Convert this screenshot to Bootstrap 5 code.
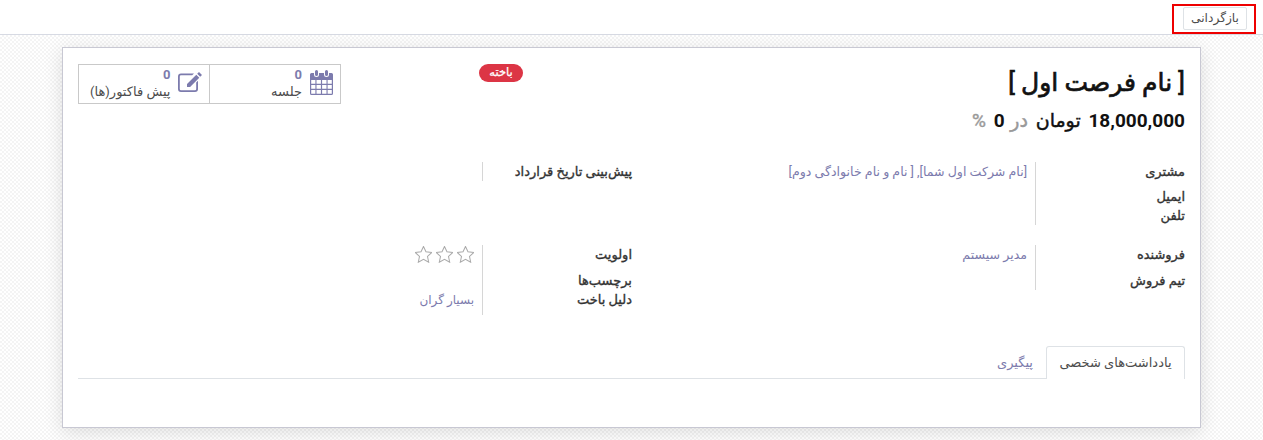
<!DOCTYPE html>
<html lang="fa" dir="rtl">
<head>
<meta charset="utf-8">
<title>فرصت</title>
<link href="https://cdn.jsdelivr.net/npm/bootstrap@5.3.0/dist/css/bootstrap.min.css" rel="stylesheet">
<style>
html,body{height:440px;overflow:hidden}
body{font-family:Roboto,"DejaVu Sans",sans-serif;font-size:13px;color:#4c4c4c;background:#fff}
.topbar{height:35px;background:#fff;border-bottom:1px solid #d7dae3;padding-inline-start:7px;padding-top:4px}
.back-wrap{display:block;width:84px;height:30px;border:2px solid #e00;padding:1px 7px 1px 9px}
.back-btn{display:block;width:64px;height:23px;padding:0;font-size:12.2px;line-height:21px;color:#4c4c4c;background:#fff;border:1px solid #dee2e6;border-radius:2px;text-align:center}
.sheet-bg{height:405px;background-color:#fff;background-image:conic-gradient(#f4f4f4 25%,#fff 0 50%,#f4f4f4 0 75%,#fff 0);background-size:4px 4px;padding:12px 62px 0 62px}
.sheet{height:381px;background:#fff;border:1px solid #c8c8d3;box-shadow:0 4px 18px rgba(0,0,0,.12);padding:16px 15px 0 15px;position:relative}
.head{height:85px}
.title-name{font-size:25px;font-weight:400;-webkit-text-stroke:.7px #111;color:#111;line-height:36px;margin:1px 0 0}
.amount{font-size:19px;-webkit-text-stroke:.45px #111;color:#111;line-height:24px;margin-top:8px}
.amount .digits{font-size:19px;font-weight:700;-webkit-text-stroke:0}
.amount .toman{margin-inline-start:3px}
.amount .muted{color:#999;-webkit-text-stroke:.45px #999;margin-inline:3px 1px}
.stat-group{width:263px;height:40px;border:1px solid #c9c9c9}
.stat-box{width:131px;height:38px;padding:2px 7px 0 0;gap:8px}
.stat-box+.stat-box{border-inline-start:1px solid #c9c9c9;gap:7px}
.stat-cal{width:23px;height:25px;flex:none;margin-top:3px;fill:#7c7bad}
.stat-edit{width:24px;height:20px;flex:none;margin-top:5px;fill:#7c7bad}
.stat-num{font-weight:700;color:#7c7bad;font-size:13px;line-height:16px}
.stat-label{font-size:13px;line-height:17px;color:#4c4c4c}
.lost-pill{position:absolute;left:416px;top:16px;height:18px;width:44px;line-height:17px;font-size:11.5px;-webkit-text-stroke:.25px #fff;background:#dc3545;color:#fff;border-radius:9px;text-align:center}
.cell-half{width:553px}
.lab{-webkit-text-stroke:.35px #333;color:#333;font-size:13px;line-height:19px;width:149px;flex:none}
.val{color:#7c7bad;font-size:12.6px;line-height:19px;padding-inline-start:8px;flex:1;border-inline-start:1px solid #d6d6d6}
.val-empty{min-height:19px}
.sec1{height:63px;margin-top:13px}
.sec2{height:70px;margin-top:20px}
.stack{display:flex;flex-direction:column}
.gap-six{margin-top:6px}
.gap-seven{margin-top:7px}
.star{width:17px;height:17px;fill:none;stroke:#aaa;stroke-width:1.2}
.stars{margin-top:1px}
.reason{padding-bottom:5px;font-size:12px}
.tabs-row{border-bottom:1px solid #dee2e6;height:33px;margin-top:31px}
.tab-on{height:33px;width:139px;border:1px solid #dee2e6;border-bottom:0;background:#fff;border-radius:3px 3px 0 0;text-align:center;line-height:32px;color:#4c4c4c}
.tab-off{height:33px;padding:0 13px;line-height:33px;color:#7c7bad}
</style>
</head>
<body>
<div class="topbar"><span class="back-wrap"><button type="button" class="back-btn">بازگردانی</button></span></div>
<div class="sheet-bg">
<div class="sheet">
  <div class="lost-pill">باخته</div>
  <div class="head d-flex justify-content-between">
    <div>
      <h1 class="title-name">[ نام فرصت اول ]</h1>
      <div class="amount"><span class="digits">18,000,000</span> <span class="toman">تومان</span> <span class="muted">در</span> <span class="digits">0</span> <span class="muted">%</span></div>
    </div>
    <div class="stat-group d-flex">
      <div class="stat-box d-flex">
        <svg class="stat-cal" viewBox="0 0 23 25"><path d="M5 1.500a1.500 1.500 0 0 1 3 0v3a1.500 1.500 0 0 1-3 0zM15 1.500a1.500 1.500 0 0 1 3 0v3a1.500 1.500 0 0 1-3 0z"/><path fill-rule="evenodd" d="M1.500 3H4v1.500a2.500 2.500 0 0 0 5 0V3h5v1.500a2.500 2.500 0 0 0 5 0V3h2.500A1.500 1.500 0 0 1 23 4.500V23.500A1.500 1.500 0 0 1 21.500 25H1.500A1.500 1.500 0 0 1 0 23.500V4.500A1.500 1.500 0 0 1 1.500 3zM1.200 10v3.800h4.200V10zm5.300 0v3.800h4.400V10zm5.600 0v3.800h4.400V10zm5.500 0v3.800h4.200V10zM1.200 15v3.800h4.200V15zm5.300 0v3.800h4.400V15zm5.600 0v3.800h4.400V15zm5.500 0v3.800h4.200V15zM1.200 20v3.800h4.200V20zm5.300 0v3.800h4.400V20zm5.600 0v3.800h4.400V20zm5.500 0v3.800h4.200V20z"/></svg>
        <div class="stack"><span class="stat-num">0</span><span class="stat-label">جلسه</span></div>
      </div>
      <div class="stat-box d-flex">
        <svg class="stat-edit" viewBox="0 0 24 20"><path d="M3 1.500h13l-1.800 1.800H3A1.200 1.200 0 0 0 1.800 4.500V17A1.200 1.200 0 0 0 3 18.200h14A1.200 1.200 0 0 0 18.200 17v-6.500L20 8.700V17a3 3 0 0 1-3 3H3a3 3 0 0 1-3-3V4.500a3 3 0 0 1 3-3z"/><path d="M21 0l3 3-1.800 1.800-3-3zM18.300 2.700l3 3-9.200 9.200H9V11.900z"/></svg>
        <div class="stack"><span class="stat-num">0</span><span class="stat-label">پیش فاکتور(ها)</span></div>
      </div>
    </div>
  </div>
  <div class="sec1 d-flex">
    <div class="cell-half d-flex">
      <div class="lab stack"><span>مشتری</span><span class="gap-six">ایمیل</span><span>تلفن</span></div>
      <div class="val">[نام شرکت اول شما], [ نام و نام خانوادگی دوم]</div>
    </div>
    <div class="cell-half d-flex align-items-start">
      <div class="lab">پیش‌بینی تاریخ قرارداد</div>
      <div class="val val-empty"></div>
    </div>
  </div>
  <div class="sec2 d-flex align-items-start">
    <div class="cell-half d-flex">
      <div class="lab stack"><span>فروشنده</span><span class="gap-seven">تیم فروش</span></div>
      <div class="val">مدیر سیستم</div>
    </div>
    <div class="cell-half d-flex align-self-stretch">
      <div class="lab stack"><span>اولویت</span><span class="gap-seven">برچسب‌ها</span><span>دلیل باخت</span></div>
      <div class="val stack justify-content-between">
        <div class="stars d-flex gap-1">
          <svg class="star" viewBox="2 2 20 20"><path d="M12 2.500l2.900 6.300 6.900.8-5.100 4.700 1.400 6.800-6.100-3.400-6.100 3.400 1.400-6.800-5.100-4.700 6.900-.8z"/></svg>
          <svg class="star" viewBox="2 2 20 20"><path d="M12 2.500l2.900 6.300 6.900.8-5.100 4.700 1.400 6.800-6.100-3.400-6.100 3.400 1.400-6.800-5.100-4.700 6.900-.8z"/></svg>
          <svg class="star" viewBox="2 2 20 20"><path d="M12 2.500l2.900 6.300 6.900.8-5.100 4.700 1.400 6.800-6.100-3.400-6.100 3.400 1.400-6.800-5.100-4.700 6.900-.8z"/></svg>
        </div>
        <div class="reason">بسیار گران</div>
      </div>
    </div>
  </div>
  <div class="tabs-row d-flex">
    <div class="tab-on">یادداشت‌های شخصی</div>
    <div class="tab-off">پیگیری</div>
  </div>
</div>
</div>
<script src="https://cdn.jsdelivr.net/npm/bootstrap@5.3.0/dist/js/bootstrap.bundle.min.js"></script>
</body>
</html>
